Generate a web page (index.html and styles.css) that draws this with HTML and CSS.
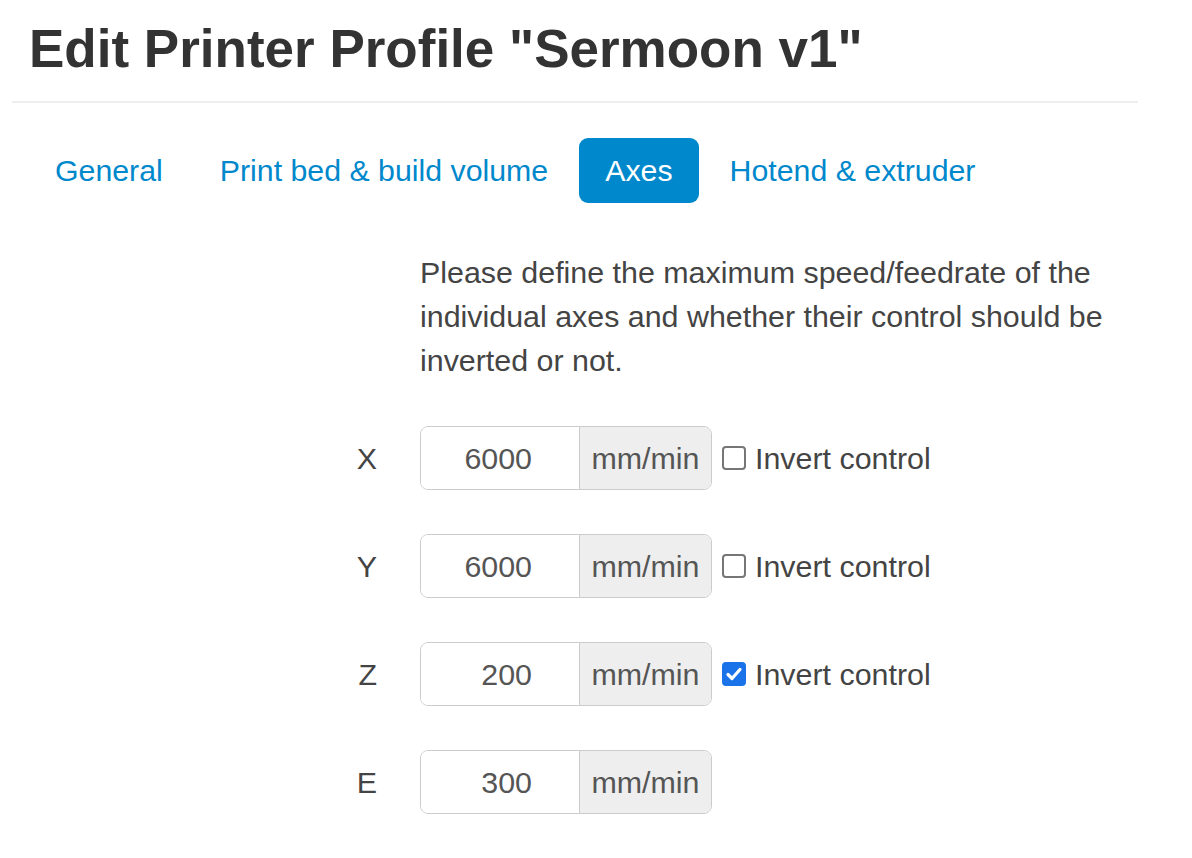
FILE: index.html
```html
<!DOCTYPE html>
<html>
<head>
<meta charset="utf-8">
<link rel="stylesheet" href="styles.css">
</head>
<body>
<div class="page">
  <h1 class="title">Edit Printer Profile "Sermoon v1"</h1>
  <hr class="sep">
  <ul class="tabs">
    <li><a class="tab">General</a></li>
    <li><a class="tab">Print bed &amp; build volume</a></li>
    <li><a class="tab active">Axes</a></li>
    <li><a class="tab">Hotend &amp; extruder</a></li>
  </ul>
  <div class="form">
    <p class="desc">Please define the maximum speed/feedrate of the individual axes and whether their control should be inverted or not.</p>
    <div class="row">
      <label class="label">X</label>
      <div class="controls">
        <div class="group"><span class="input">6000</span><span class="addon">mm/min</span></div>
        <label class="check"><span class="box"></span>Invert control</label>
      </div>
    </div>
    <div class="row">
      <label class="label">Y</label>
      <div class="controls">
        <div class="group"><span class="input">6000</span><span class="addon">mm/min</span></div>
        <label class="check"><span class="box"></span>Invert control</label>
      </div>
    </div>
    <div class="row">
      <label class="label">Z</label>
      <div class="controls">
        <div class="group"><span class="input">200</span><span class="addon">mm/min</span></div>
        <label class="check"><span class="box checked"><svg viewBox="0 0 24 24" width="24" height="24"><path d="M6 12.5l4 4 8-9" fill="none" stroke="#fff" stroke-width="3.2" stroke-linecap="round" stroke-linejoin="round"/></svg></span>Invert control</label>
      </div>
    </div>
    <div class="row">
      <label class="label">E</label>
      <div class="controls">
        <div class="group"><span class="input">300</span><span class="addon">mm/min</span></div>
      </div>
    </div>
  </div>
</div>
</body>
</html>
```
FILE: styles.css
```css
html, body { margin: 0; padding: 0; background: #fff; }
body {
  font-family: "Liberation Sans", Arial, Helvetica, sans-serif;
  color: #333;
}
.page { padding: 0 54px 0 12px; }
.title {
  margin: 17px 0 0 17px;
  font-size: 53px;
  line-height: 64px;
  font-weight: bold;
  color: #333;
}
.sep {
  border: 0;
  border-top: 2px solid #eee;
  margin: 20px 0 0 0;
}
.tabs {
  list-style: none;
  margin: 35px 0 0 0;
  padding: 0 0 0 17px;
  display: flex;
  gap: 5px;
}
.tab {
  display: block;
  padding: 0 26px;
  height: 65px;
  line-height: 65px;
  font-size: 30.3px;
  color: #0088cc;
  border-radius: 9px;
}
.tab.active { background: #0088cc; color: #fff; }
.form { padding-left: 408px; margin-top: 47px; }
.desc {
  margin: 0 0 44px 0;
  font-size: 30.4px;
  line-height: 44px;
  color: #444;
  width: 720px;
}
.row { display: flex; align-items: center; margin-bottom: 44px; position: relative; }
.label {
  position: absolute;
  right: calc(100% + 43px);
  font-size: 30.4px;
  color: #444;
}
.controls { display: flex; align-items: center; }
.group {
  display: flex;
  height: 64px;
  border: 1px solid #ccc;
  border-radius: 8px;
  box-sizing: border-box;
  overflow: hidden;
}
.input {
  width: 158px;
  box-sizing: border-box;
  text-align: right;
  padding-right: 47px;
  line-height: 62px;
  font-size: 30.4px;
  color: #555;
  background: #fff;
}
.addon {
  width: 132px;
  box-sizing: border-box;
  border-left: 1px solid #ccc;
  background: #eee;
  text-align: center;
  line-height: 62px;
  font-size: 30.4px;
  color: #555;
}
.check {
  display: flex;
  align-items: center;
  margin-left: 10px;
  font-size: 30.4px;
  color: #444;
}
.box {
  width: 24px;
  height: 24px;
  box-sizing: border-box;
  border: 2px solid #767676;
  border-radius: 4px;
  margin-right: 9px;
  display: inline-block;
}
.box.checked { background: #1a73e8; border-color: #1a73e8; position: relative; }
.box.checked svg { position: absolute; left: -2px; top: -2px; }
```
